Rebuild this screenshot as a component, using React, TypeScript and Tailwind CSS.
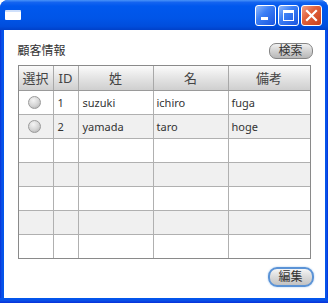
import React from "react";

const rows = [
  { id: "1", sei: "suzuki", mei: "ichiro", note: "fuga" },
  { id: "2", sei: "yamada", mei: "taro", note: "hoge" },
  null,
  null,
  null,
  null,
  null,
];

const font = "font-['Noto_Sans','Noto_Sans_CJK_JP',sans-serif]";

function TitleButton({ kind }: { kind: "min" | "max" | "close" }) {
  const bg =
    kind === "close"
      ? "bg-[linear-gradient(135deg,#f0a08a_0%,#e2623c_40%,#c8401c_100%)]"
      : "bg-[linear-gradient(135deg,#8fb8fb_0%,#3c7ff5_40%,#1a55e0_100%)]";
  return (
    <div
      className={`relative flex h-[21px] w-[21px] items-center justify-center rounded-[3px] border border-white ${bg}`}
    >
      {kind === "min" && (
        <div className="absolute bottom-[5px] left-[5px] h-[3px] w-[7px] bg-white" />
      )}
      {kind === "max" && (
        <div className="h-[11px] w-[11px] border border-t-[3px] border-white" />
      )}
      {kind === "close" && (
        <svg width="13" height="13" viewBox="0 0 13 13">
          <path d="M2 2 L11 11 M11 2 L2 11" stroke="white" strokeWidth="2.2" strokeLinecap="square" />
        </svg>
      )}
    </div>
  );
}

function Radio() {
  return (
    <div className="h-[13px] w-[13px] rounded-full border border-[#9a9a9a] bg-[radial-gradient(circle_at_40%_30%,#f4f4f4_0%,#d4d4d4_55%,#a8a8a8_100%)]" />
  );
}

export default function App() {
  const cols = "grid grid-cols-[35px_25px_75px_75px_81px]";
  return (
    <div className={`h-[303px] w-[328px] overflow-hidden bg-white ${font}`}>
      <div className="flex h-full w-full flex-col overflow-hidden rounded-t-[8px] bg-[#0050e0]">
        {/* title bar */}
        <div className="flex h-[30px] shrink-0 items-center bg-[linear-gradient(to_bottom,#4a93f8_0%,#1464f0_8%,#0058ee_20%,#0055e8_60%,#004ddc_88%,#0040c8_100%)] pl-[5px] pr-[6px]">
          <div className="h-[10px] w-[16px] rounded-[1px] border-t-[2px] border-[#cfe0fb] bg-white" />
          <div className="flex-1" />
          <div className="flex gap-[2px]">
            <TitleButton kind="min" />
            <TitleButton kind="max" />
            <TitleButton kind="close" />
          </div>
        </div>
        {/* body */}
        <div className="flex min-h-0 flex-1">
          <div className="w-[4px] bg-[linear-gradient(to_right,#0831d9_0%,#0a4fe6_40%,#0058ee_100%)]" />
          <div className="flex flex-1 flex-col bg-white px-[14px]">
            <div className="mt-[13px] flex h-[16px] items-center justify-between">
              <span className="text-[12px] leading-none text-[#333]">顧客情報</span>
              <button className="mr-[-2px] flex h-[16px] w-[44px] items-center justify-center rounded-[7px] border border-[#858585] bg-[linear-gradient(to_bottom,#f0f0f0_0%,#d2d2d2_50%,#b8b8b8_100%)] text-[12px] leading-none text-[#333]">
                検索
              </button>
            </div>
            {/* table */}
            <div className="mt-[6px] w-[293px] border border-[#8a8a8a]">
              <div
                className={`${cols} h-[25px] border-b border-[#9a9a9a] bg-[linear-gradient(to_bottom,#fbfbfb_0%,#e6e6e6_45%,#cfcfcf_100%)] text-[13px] leading-none text-[#444]`}
              >
                {["選択", "ID", "姓", "名", "備考"].map((h, i) => (
                  <div
                    key={h}
                    className={`flex items-center ${i === 1 ? "pl-[5px]" : "justify-center"} ${i < 4 ? "border-r border-[#a8a8a8]" : ""}`}
                  >
                    {h}
                  </div>
                ))}
              </div>
              {rows.map((r, idx) => (
                <div
                  key={idx}
                  className={`${cols} ${idx < rows.length - 1 ? "h-[24px] border-b" : "h-[23px]"} border-[#b0b0b0] ${idx % 2 === 1 ? "bg-[#f0f0f0]" : "bg-white"} text-[11px] leading-none text-[#333]`}
                >
                  <div className="flex items-center justify-center border-r border-[#b0b0b0] pr-[2px]">
                    {r && <Radio />}
                  </div>
                  <div className="flex items-center border-r border-[#b0b0b0] pl-[4px]">{r?.id}</div>
                  <div className="flex items-center border-r border-[#b0b0b0] pl-[4px]">{r?.sei}</div>
                  <div className="flex items-center border-r border-[#b0b0b0] pl-[3px]">{r?.mei}</div>
                  <div className="flex items-center pl-[3px]">{r?.note}</div>
                </div>
              ))}
            </div>
            <div className="mt-[8px] flex justify-end">
              <button className="mr-[-3px] flex h-[20px] w-[46px] items-center justify-center rounded-[9px] border-2 border-[#5b93d6] bg-[linear-gradient(to_bottom,#f6f6f6_0%,#dadada_50%,#c2c2c2_100%)] text-[12px] leading-none text-[#333] shadow-[0_0_2px_#9cc4f0]">
                編集
              </button>
            </div>
          </div>
          <div className="w-[4px] bg-[linear-gradient(to_left,#0831d9_0%,#0a4fe6_40%,#0058ee_100%)]" />
        </div>
        <div className="h-[5px] shrink-0 bg-[linear-gradient(to_bottom,#0058ee_0%,#0a4fe6_50%,#0831d9_100%)]" />
      </div>
    </div>
  );
}
